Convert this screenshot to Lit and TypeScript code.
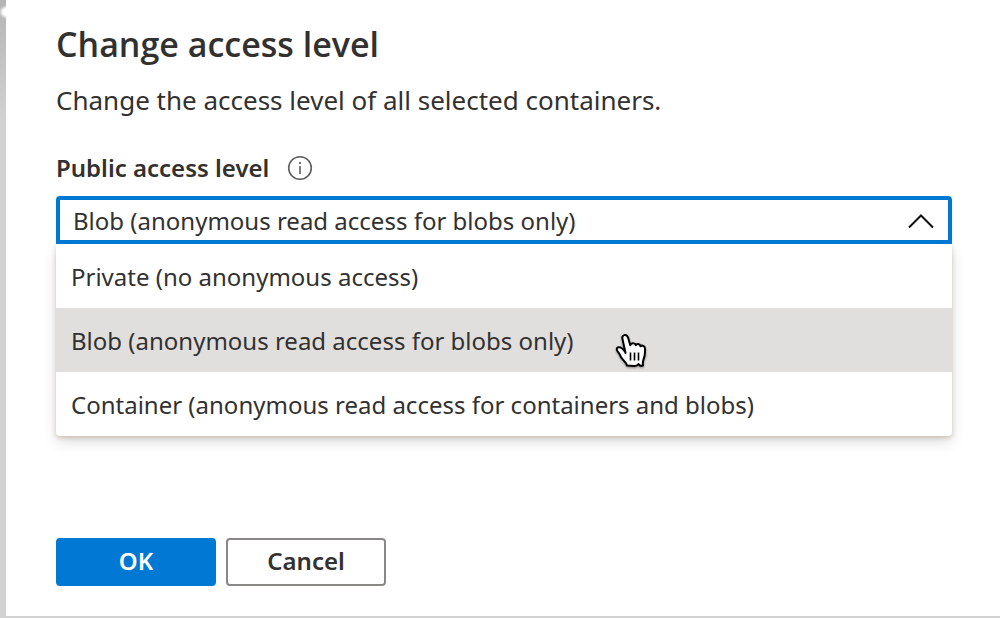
import { LitElement, html, css } from "lit";
import { customElement, state } from "lit/decorators.js";
import { classMap } from "lit/directives/class-map.js";

interface AccessLevel {
  value: string;
  label: string;
}

const LEVELS: AccessLevel[] = [
  { value: "private", label: "Private (no anonymous access)" },
  { value: "blob", label: "Blob (anonymous read access for blobs only)" },
  { value: "container", label: "Container (anonymous read access for containers and blobs)" },
];

@customElement("access-level-select")
export class AccessLevelSelect extends LitElement {
  @state() private selected = "blob";

  static styles = css`
    :host {
      display: block;
    }
    .label-row {
      display: flex;
      align-items: center;
      gap: 18px;
      height: 32px;
      margin-bottom: 12px;
    }
    .label {
      font-weight: 600;
      font-size: 24px;
      line-height: 32px;
    }
    .info {
      display: block;
      width: 26px;
      height: 26px;
    }
    .field {
      position: relative;
    }
    .select {
      appearance: none;
      display: block;
      box-sizing: border-box;
      width: 100%;
      height: 48px;
      padding: 0 48px 0 13px;
      border: 4px solid #0078d4;
      border-radius: 4px 4px 0 0;
      background: #fff;
      color: #323130;
      font: inherit;
      font-size: 24px;
      outline: none;
    }
    .chevron {
      position: absolute;
      right: 17px;
      top: 16px;
      width: 28px;
      height: 18px;
      pointer-events: none;
    }
    .menu {
      position: absolute;
      top: 100%;
      left: 0;
      right: 0;
      margin: 0;
      padding: 0;
      list-style: none;
      background: #fff;
      border-radius: 0 0 4px 4px;
      box-shadow: 0 6px 14px rgba(0, 0, 0, 0.13), 0 2px 4px rgba(120, 70, 10, 0.22);
      clip-path: inset(0 -40px -40px -40px);
    }
    .option {
      height: 64px;
      padding: 0 15px;
      line-height: 66px;
      font-size: 24px;
      white-space: nowrap;
      cursor: pointer;
    }
    .option.active {
      background: #e1dfdd;
    }
    .pointer {
      position: absolute;
      left: 559px;
      top: 136px;
      width: 34px;
      height: 38px;
      pointer-events: none;
      filter: drop-shadow(0 1px 1px rgba(0, 0, 0, 0.4));
    }
  `;

  private onChange(e: Event) {
    this.selected = (e.target as HTMLSelectElement).value;
  }

  render() {
    return html`
      <div class="label-row">
        <label class="label" for="level">Public access level</label>
        <svg class="info" viewBox="0 0 26 26" fill="none" stroke="#605e5c" aria-hidden="true">
          <circle cx="13" cy="13" r="11.3" stroke-width="1.6" />
          <path d="M13 11v8" stroke-width="1.6" />
          <path d="M13 7v2" stroke-width="1.8" />
        </svg>
      </div>
      <div class="field">
        <select class="select" id="level" .value=${this.selected} @change=${this.onChange}>
          ${LEVELS.map(
            (l) => html`<option value=${l.value} ?selected=${l.value === this.selected}>${l.label}</option>`
          )}
        </select>
        <svg class="chevron" viewBox="0 0 28 18" fill="none" stroke="#111" stroke-width="2" aria-hidden="true">
          <path d="M2 15.500L14 3.500L26 15.500" />
        </svg>
        <ul class="menu" role="listbox" aria-label="Public access level">
          ${LEVELS.map(
            (l) => html`<li
              class=${classMap({ option: true, active: l.value === this.selected })}
              role="option"
              aria-selected=${l.value === this.selected ? "true" : "false"}
              @click=${() => (this.selected = l.value)}
            >${l.label}</li>`
          )}
        </ul>
        <svg class="pointer" viewBox="0 0 34 38" aria-hidden="true">
          <path
            d="M10.500 21L7.600 7.500C6.900 5 7.700 3.500 9.400 3.100C11.300 2.700 12.500 3.800 13.100 5.800L15.300 13.300C16 10.800 20 10.600 20.800 13.300C21.800 11.300 25 11.600 25.500 14.300C27 12.900 29.800 13.800 30 16.500C30.300 21 30.200 23.500 28.500 27.500C28 29 27.500 31 28 33.500C26 34.300 24.500 34 23.500 32C22.500 33.500 21.500 34 19.500 34L12 33.500C11.500 30 6 27 5.200 23.500C4.500 21 2 19.500 1.800 17.500C1.600 15.200 4.500 14.500 6.500 16C8 17 9 18.500 10.300 20Z"
            fill="#fff" stroke="#000" stroke-width="2" stroke-linejoin="round"
          />
          <path d="M15.500 20.500v8M19.500 20.500v8M23.500 20.500v8" stroke="#000" stroke-width="1.600" fill="none" />
        </svg>
      </div>
    `;
  }
}

@customElement("app-root")
export class AppRoot extends LitElement {
  static styles = css`
    :host {
      display: flex;
      box-sizing: border-box;
      min-height: 100vh;
      padding: 0 0 2px 6px;
      background:
        radial-gradient(circle at 6px 12px, #fff 3px, rgba(255, 255, 255, 0) 7px) 0 0 / 6px 24px no-repeat,
        linear-gradient(to bottom, #b4b4b4, rgba(204, 204, 204, 0) 120px) 0 0 / 6px 100% no-repeat,
        #d2d2d2;
      color: #323130;
      font-family: "Noto Sans", "Open Sans", sans-serif;
    }
    .panel {
      display: flex;
      flex: 1;
      flex-direction: column;
      padding: 24px 48px 30px 50px;
      background: #fff;
    }
    .title {
      margin: 0 0 20px;
      font-family: "Open Sans", "Noto Sans", sans-serif;
      font-size: 34px;
      font-weight: 600;
      line-height: 40px;
    }
    .intro {
      margin: 0 0 36px;
      font-size: 26px;
      line-height: 32px;
    }
    .actions {
      display: flex;
      gap: 10px;
      margin-top: auto;
    }
    .button {
      box-sizing: border-box;
      width: 160px;
      height: 48px;
      padding: 0 0 2px;
      border: 2px solid #8a8886;
      border-radius: 4px;
      background: #fff;
      color: #323130;
      font: inherit;
      font-size: 24px;
      font-weight: 600;
      line-height: 32px;
    }
    .button.primary {
      border-color: #0078d4;
      background: #0078d4;
      color: #fff;
    }
  `;

  render() {
    return html`
      <main class="panel">
        <h1 class="title">Change access level</h1>
        <p class="intro">Change the access level of all selected containers.</p>
        <access-level-select></access-level-select>
        <div class="actions">
          <button class="button primary" type="button">OK</button>
          <button class="button" type="button">Cancel</button>
        </div>
      </main>
    `;
  }
}
